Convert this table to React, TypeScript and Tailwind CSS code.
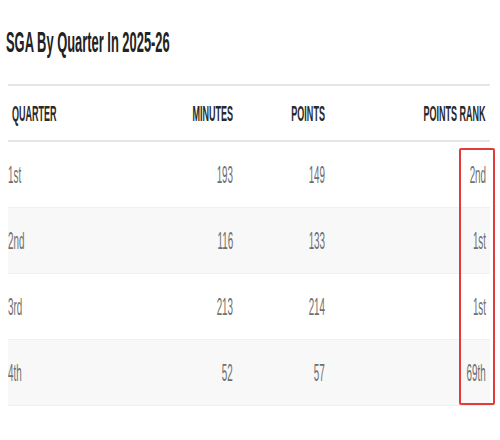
import React from "react";

const rows = [
  { q: "1st", min: 193, pts: 149, rank: "2nd", striped: false },
  { q: "2nd", min: 116, pts: 133, rank: "1st", striped: true },
  { q: "3rd", min: 213, pts: 214, rank: "1st", striped: false },
  { q: "4th", min: 52, pts: 57, rank: "69th", striped: true },
];

const cols = "grid grid-cols-[140px_85px_92px_161px]";

function Cell({ children, right }: { children: React.ReactNode; right?: boolean }) {
  return (
    <div className={`flex ${right ? "justify-end" : "justify-start"}`}>
      <span className={`inline-block ${right ? "origin-right" : "origin-left"} scale-x-[0.41] whitespace-nowrap`}>
        {children}
      </span>
    </div>
  );
}

export default function App() {
  return (
    <div className="w-[500px] h-[440px] bg-white font-['Liberation_Sans',Arial,sans-serif] overflow-hidden">
      <div className="pt-6 pl-1.5">
        <h2 className="inline-block origin-left scale-x-[0.43] whitespace-nowrap text-[30px] leading-[36px] font-bold text-[#222]">
          SGA By Quarter In 2025-26
        </h2>
      </div>

      <div className="relative ml-2 mt-6 w-[482px]">
        <div className={`${cols} h-[58px] items-center pr-1 border-t-2 border-b-2 border-[#e6e6e6] text-[22px] font-bold text-[#2a2a2a]`}>
          <div className="pl-1">
            <Cell>QUARTER</Cell>
          </div>
          <Cell right>MINUTES</Cell>
          <Cell right>POINTS</Cell>
          <Cell right>POINTS RANK</Cell>
        </div>

        {rows.map((r) => (
          <div
            key={r.q}
            className={`${cols} h-[66px] items-center pr-1 border-b border-[#f0f0f0] text-[24px] text-[#6f6f6f] ${
              r.striped ? "bg-[#f8f8f8]" : "bg-white"
            }`}
          >
            <Cell>{r.q}</Cell>
            <Cell right>{r.min}</Cell>
            <Cell right>{r.pts}</Cell>
            <Cell right>{r.rank}</Cell>
          </div>
        ))}

        {/* highlight around the rank column */}
        <div className="absolute left-[451px] top-[64px] w-[36px] h-[257px] border-2 border-[#e23b3b] rounded-[2px] pointer-events-none" />
      </div>
    </div>
  );
}
